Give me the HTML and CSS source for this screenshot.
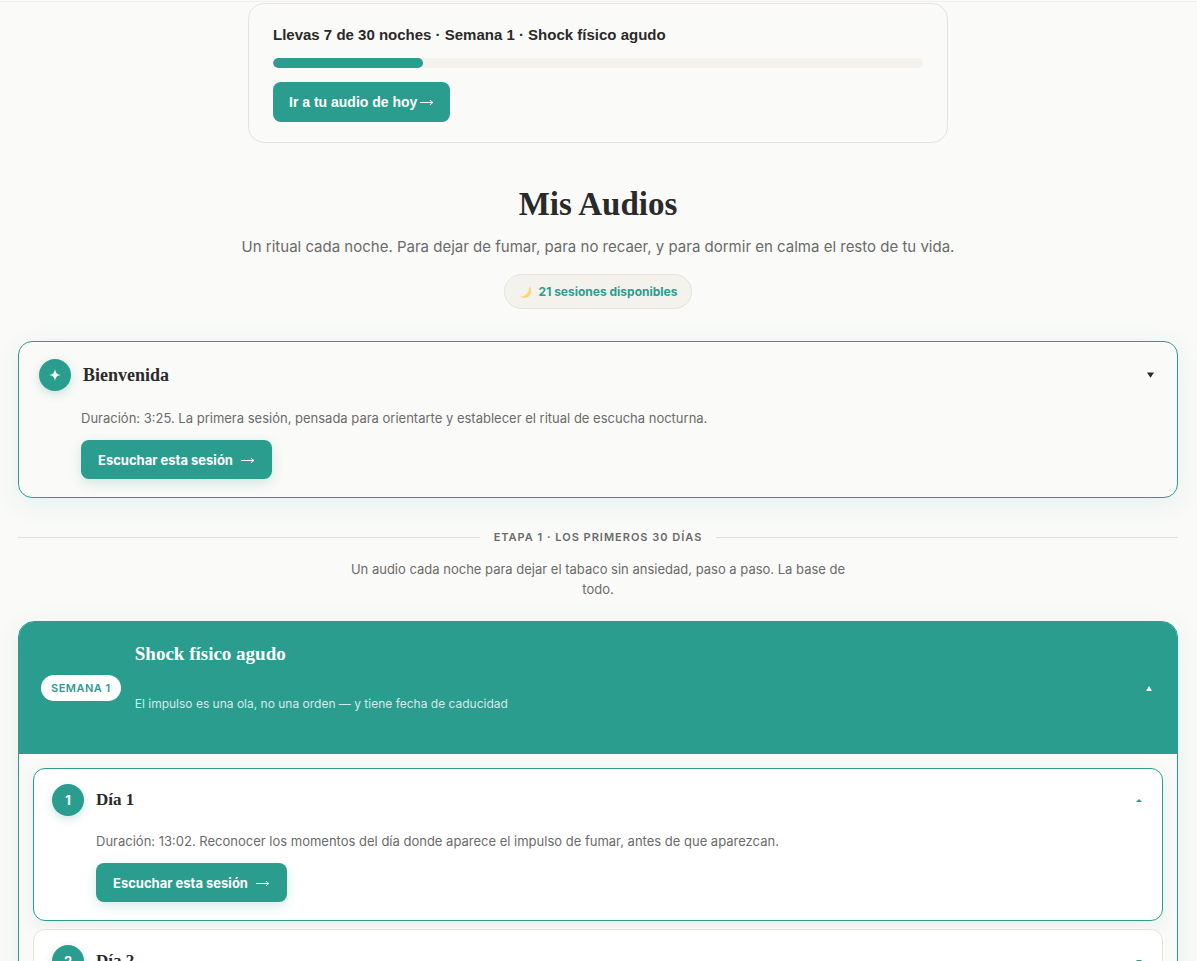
FILE: index.html
```html
<!DOCTYPE html>
<html lang="es">
<head>
<meta charset="utf-8">
<meta name="viewport" content="width=device-width, initial-scale=1">
<title>Mis Audios</title>
<link rel="stylesheet" href="styles.css">
</head>
<body>
<header class="topbar"></header>
<main class="page">
  <section class="progress-card">
    <p class="progress-title" id="progress-label">Llevas 7 de 30 noches · Semana 1 · Shock físico agudo</p>
    <div class="track" role="progressbar" aria-labelledby="progress-label" aria-valuemin="0" aria-valuemax="30" aria-valuenow="7"><div class="fill" style="width:23%"></div></div>
    <a class="btn btn-today" href="#dia-1"><span>Ir a tu audio de hoy</span><svg class="arrow" viewBox="0 0 14 8" aria-hidden="true"><path d="M0 4.500H13M10 2Q11 4 13 4.500Q11 5 10 7"/></svg></a>
  </section>

  <section class="intro">
    <h1 class="title">Mis Audios</h1>
    <p class="subtitle">Un ritual cada noche. Para dejar de fumar, para no recaer, y para dormir en calma el resto de tu vida.</p>
    <span class="chip"><svg class="moon" viewBox="0 0 14 14" aria-hidden="true"><path d="M10.500 1C13.700 5 12.500 10.500 8.200 12.300C5.500 13.400 2.500 13 .8 11.600C6.500 11.800 10.500 8 10.500 1Z" fill="#ffd36e"/></svg><span>21 sesiones disponibles</span></span>
  </section>

  <article class="session session-welcome" id="bienvenida">
    <button class="session-head" type="button" aria-expanded="true">
      <span class="badge"><svg class="star" viewBox="0 0 12 12" aria-hidden="true"><path d="M6 0C6.500 3.800 8 5.500 12 6C8 6.500 6.500 8.200 6 12C5.500 8.200 4 6.500 0 6C4 5.500 5.500 3.800 6 0Z"/></svg></span>
      <span class="session-name">Bienvenida</span>
      <svg class="caret caret-down" viewBox="0 0 8 6" aria-hidden="true"><path d="M0 0H8L4 6Z"/></svg>
    </button>
    <div class="session-body">
      <p class="session-text">Duración: 3:25. La primera sesión, pensada para orientarte y establecer el ritual de escucha nocturna.</p>
      <a class="btn btn-listen" href="#bienvenida"><span>Escuchar esta sesión</span><svg class="arrow" viewBox="0 0 14 8" aria-hidden="true"><path d="M0 4.500H13M10 2Q11 4 13 4.500Q11 5 10 7"/></svg></a>
    </div>
  </article>

  <h2 class="stage">Etapa 1 · Los primeros 30 días</h2>
  <p class="stage-text">Un audio cada noche para dejar el tabaco sin ansiedad, paso a paso. La base de todo.</p>

  <section class="week">
    <button class="week-head" type="button" aria-expanded="true">
      <span class="week-tag">Semana 1</span>
      <span class="week-info">
        <span class="week-name">Shock físico agudo</span>
        <span class="week-note">El impulso es una ola, no una orden — y tiene fecha de caducidad</span>
      </span>
      <svg class="caret caret-up" viewBox="0 0 6 5" aria-hidden="true"><path d="M3 0L6 5H0Z"/></svg>
    </button>
    <div class="week-body">
      <article class="session session-day is-open" id="dia-1">
        <button class="session-head" type="button" aria-expanded="true">
          <span class="badge">1</span>
          <span class="session-name">Día 1</span>
          <svg class="caret caret-day" viewBox="0 0 6 3" aria-hidden="true"><path d="M3 0L6 3H0Z"/></svg>
        </button>
        <div class="session-body">
          <p class="session-text">Duración: 13:02. Reconocer los momentos del día donde aparece el impulso de fumar, antes de que aparezcan.</p>
          <a class="btn btn-listen" href="#dia-1"><span>Escuchar esta sesión</span><svg class="arrow" viewBox="0 0 14 8" aria-hidden="true"><path d="M0 4.500H13M10 2Q11 4 13 4.500Q11 5 10 7"/></svg></a>
        </div>
      </article>
      <article class="session session-day" id="dia-2">
        <button class="session-head" type="button" aria-expanded="false">
          <span class="badge">2</span>
          <span class="session-name">Día 2</span>
          <svg class="caret caret-day" viewBox="0 0 6 3" aria-hidden="true"><path d="M0 0H6L3 3Z"/></svg>
        </button>
      </article>
    </div>
  </section>
</main>
</body>
</html>
```
FILE: styles.css
```css
:root {
  --teal: #2a9d8f;
  --ink: #2a2a2a;
  --muted: #6b6b6b;
  --line: #e5e3dc;
  --paper: #fafaf8;
  --sand: #f4f2ed;
  --serif: "Liberation Serif", serif;
}

* { box-sizing: border-box; }

body {
  margin: 0;
  height: 100vh;
  overflow: hidden;
  background: var(--paper);
  color: var(--ink);
  font-family: Inter, sans-serif;
}

h1, h2, p { margin: 0; }

button {
  border: 0;
  padding: 0;
  background: none;
  color: inherit;
  font: inherit;
  text-align: left;
  cursor: pointer;
}

.topbar {
  height: 2px;
  border-bottom: 1px solid #f0efeb;
}

.page {
  max-width: 1197px;
  margin: 0 auto;
  padding: 1px 19px 0 18px;
}

.progress-card {
  max-width: 700px;
  margin: 0 auto;
  padding: 20px 24px;
  border: 1px solid var(--line);
  border-radius: 16px;
  font-family: "Liberation Sans", sans-serif;
}

.progress-title {
  margin-bottom: 12px;
  font-size: 15px;
  font-weight: 700;
  line-height: 22px;
}

.track {
  height: 10px;
  margin-bottom: 14px;
  border-radius: 999px;
  background: var(--sand);
  overflow: hidden;
}

.fill {
  height: 100%;
  border-radius: 999px;
  background: var(--teal);
}

.btn {
  display: inline-flex;
  align-items: center;
  border-radius: 8px;
  background: var(--teal);
  color: #fff;
  text-decoration: none;
  vertical-align: top;
}

.btn-today {
  height: 40px;
  padding: 0 16px;
  gap: 3px;
  font-size: 14px;
  font-weight: 700;
}

.btn-listen {
  height: 39px;
  padding: 0 17px;
  gap: 8px;
  font-size: 13px;
  font-weight: 700;
  box-shadow: 0 4px 12px rgba(42, 157, 143, 0.2);
}

.arrow {
  width: 14px;
  height: 8px;
  fill: none;
  stroke: #fff;
}

.intro {
  display: flex;
  flex-direction: column;
  align-items: center;
  margin-bottom: 32px;
  padding-top: 40px;
  text-align: center;
}

.title {
  margin-bottom: 10px;
  font-family: var(--serif);
  font-size: 33px;
  line-height: 42px;
}

.subtitle {
  margin-bottom: 15px;
  color: var(--muted);
  font-size: 15px;
  line-height: 24px;
}

.chip {
  display: inline-flex;
  align-items: center;
  gap: 6px;
  height: 35px;
  padding: 0 14px;
  border: 1px solid var(--line);
  border-radius: 999px;
  background: var(--sand);
  color: var(--teal);
  font-size: 12px;
  font-weight: 700;
}

.moon {
  width: 14px;
  height: 14px;
}

.session {
  border: 1px solid var(--line);
}

.session-welcome {
  margin-bottom: 29px;
  padding: 17px 20px 18px;
  border-color: var(--teal);
  border-radius: 14px;
  box-shadow: 0 6px 24px rgba(42, 157, 143, 0.1);
}

.session-head {
  display: flex;
  align-items: center;
  gap: 12px;
  width: 100%;
}

.badge {
  display: flex;
  flex: none;
  align-items: center;
  justify-content: center;
  width: 32px;
  height: 32px;
  border-radius: 50%;
  background: var(--teal);
  color: #fff;
  font-size: 13px;
  font-weight: 700;
  box-shadow: 0 3px 10px rgba(42, 157, 143, 0.25);
}

.star {
  width: 12px;
  height: 12px;
  fill: #fff;
}

.session-name {
  flex: 1;
  font-family: var(--serif);
  font-size: 17px;
  font-weight: 700;
  line-height: 24px;
}

.session-welcome .session-name { font-size: 18px; }

.caret { fill: currentColor; }

.caret-down {
  width: 7px;
  height: 6px;
  margin-right: 3px;
}

.caret-up {
  width: 6px;
  height: 5px;
}

.caret-day {
  width: 6px;
  height: 3px;
  color: var(--teal);
}

.session-body { padding: 16px 0 0 42px; }

.session-text {
  margin-bottom: 10px;
  color: var(--muted);
  font-size: 13px;
  line-height: 23px;
}

.stage {
  display: flex;
  align-items: center;
  gap: 14px;
  margin-bottom: 12px;
  color: var(--muted);
  font-size: 11px;
  font-weight: 600;
  letter-spacing: 1px;
  line-height: 20px;
  text-transform: uppercase;
}

.stage::before,
.stage::after {
  flex: 1;
  height: 1px;
  background: #e0dfda;
  content: "";
}

.stage-text {
  max-width: 520px;
  margin: 0 auto 22px;
  color: var(--muted);
  font-size: 13px;
  line-height: 20px;
  text-align: center;
}

.week {
  border: 1px solid var(--teal);
  border-radius: 16px;
  box-shadow: 0 6px 24px rgba(42, 157, 143, 0.1);
  overflow: hidden;
}

.week-head {
  display: flex;
  align-items: center;
  gap: 14px;
  width: 100%;
  padding: 20px 25px 20px 22px;
  background: var(--teal);
  color: #fff;
}

.week-tag {
  padding: 0 10px;
  border-radius: 999px;
  background: #fff;
  color: var(--teal);
  font-size: 11px;
  font-weight: 600;
  letter-spacing: 0.5px;
  line-height: 26px;
  text-transform: uppercase;
}

.week-info {
  display: flex;
  flex: 1;
  flex-direction: column;
  gap: 28px;
  padding-bottom: 20px;
}

.week-name {
  font-family: var(--serif);
  font-size: 19px;
  font-weight: 700;
  line-height: 24px;
}

.week-note {
  color: #d4ebe9;
  font-size: 12px;
  line-height: 20px;
}

.week-body {
  display: flex;
  flex-direction: column;
  gap: 8px;
  padding: 14px;
}

.session-day {
  padding: 15px 20px 18px 18px;
  border-radius: 12px;
  background: #fff;
}

.session-day .session-body { padding: 14px 0 0 44px; }

.session-day.is-open {
  border-color: var(--teal);
  box-shadow: 0 4px 16px rgba(42, 157, 143, 0.1);
}
```
